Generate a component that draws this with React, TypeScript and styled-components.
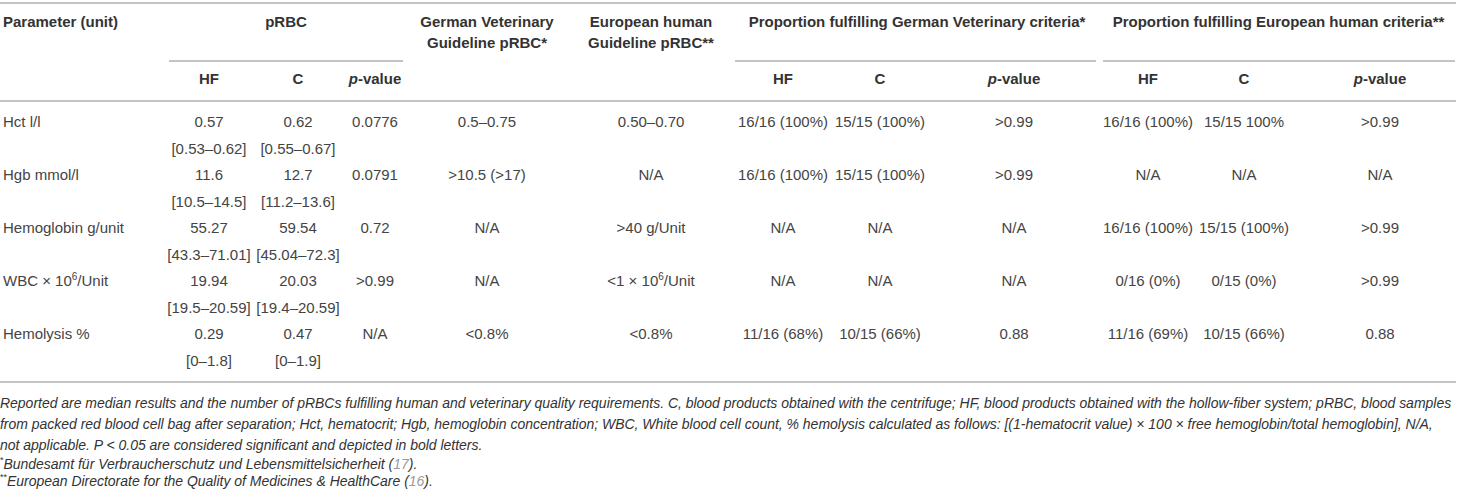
import React from 'react';
import styled, { createGlobalStyle } from 'styled-components';

const GlobalStyle = createGlobalStyle`
  body {
    margin: 0;
    background: #fff;
    font-family: "Liberation Sans", Arial, Helvetica, sans-serif;
  }
`;

const RULE = '#c4c4c4';

const Page = styled.div`
  width: 1456px;
  padding-top: 2px;
`;

const Table = styled.table`
  width: 1456px;
  table-layout: fixed;
  border-collapse: collapse;

  thead {
    border-top: 2px solid ${RULE};
    border-bottom: 2px solid ${RULE};
  }

  tbody {
    border-bottom: 2px solid ${RULE};
  }
`;

const Th = styled.th<{ $align?: 'left' | 'center'; $pad?: string; $rule?: string }>`
  font-weight: bold;
  font-size: 15px;
  line-height: 21px;
  color: #333;
  vertical-align: top;
  text-align: ${p => p.$align || 'center'};
  padding: ${p => p.$pad || '7px 0 0'};
  ${p =>
    p.$rule &&
    `
    background-image: linear-gradient(${RULE}, ${RULE});
    background-repeat: no-repeat;
    background-size: ${p.$rule} 2px;
    background-position: 2px 100%;
  `}

  em {
    font-style: italic;
  }
`;

const Td = styled.td<{ $align?: 'left' | 'center'; $first?: boolean; $last?: boolean }>`
  font-size: 15px;
  line-height: 26.5px;
  color: #444;
  vertical-align: top;
  text-align: ${p => p.$align || 'center'};
  padding: ${p => (p.$first ? '7px' : '0')} 0 ${p => (p.$last ? '7px' : '0')};
  padding-left: ${p => (p.$align === 'left' ? '3px' : '0')};
  white-space: nowrap;

  sup {
    font-size: 10px;
    line-height: 0;
  }
`;

const BodyRow = styled.tr`
  td:last-child {
    padding-left: 11px;
  }
`;

const SubHeadRow = styled.tr`
  th:last-child {
    padding-left: 11px;
  }
`;

const Notes = styled.div`
  margin-top: 10px;
  font-style: italic;
  font-size: 14px;
  letter-spacing: -0.02px;
  color: #333;
  white-space: nowrap;
`;

const NotePara = styled.p`
  margin: 0;
  line-height: 21px;
`;

const FootNote = styled.p`
  margin: 0;
  line-height: 17px;

  sup {
    font-size: 9px;
    line-height: 0;
    font-style: normal;
  }
`;

const Ref = styled.span`
  color: #9a9a9a;
`;

const colWidths = [167, 84, 94, 60, 164, 164, 100, 94, 174, 94, 98, 163];

type Cell = React.ReactNode | [React.ReactNode, React.ReactNode];

const rows: { label: React.ReactNode; cells: Cell[] }[] = [
  {
    label: 'Hct l/l',
    cells: [
      ['0.57', '[0.53–0.62]'],
      ['0.62', '[0.55–0.67]'],
      '0.0776',
      '0.5–0.75',
      '0.50–0.70',
      '16/16 (100%)',
      '15/15 (100%)',
      '>0.99',
      '16/16 (100%)',
      '15/15 100%',
      '>0.99',
    ],
  },
  {
    label: 'Hgb mmol/l',
    cells: [
      ['11.6', '[10.5–14.5]'],
      ['12.7', '[11.2–13.6]'],
      '0.0791',
      '>10.5 (>17)',
      'N/A',
      '16/16 (100%)',
      '15/15 (100%)',
      '>0.99',
      'N/A',
      'N/A',
      'N/A',
    ],
  },
  {
    label: 'Hemoglobin g/unit',
    cells: [
      ['55.27', '[43.3–71.01]'],
      ['59.54', '[45.04–72.3]'],
      '0.72',
      'N/A',
      '>40 g/Unit',
      'N/A',
      'N/A',
      'N/A',
      '16/16 (100%)',
      '15/15 (100%)',
      '>0.99',
    ],
  },
  {
    label: (
      <>
        WBC × 10<sup>6</sup>/Unit
      </>
    ),
    cells: [
      ['19.94', '[19.5–20.59]'],
      ['20.03', '[19.4–20.59]'],
      '>0.99',
      'N/A',
      <>
        {'<1 × 10'}
        <sup>6</sup>/Unit
      </>,
      'N/A',
      'N/A',
      'N/A',
      '0/16 (0%)',
      '0/15 (0%)',
      '>0.99',
    ],
  },
  {
    label: 'Hemolysis %',
    cells: [
      ['0.29', '[0–1.8]'],
      ['0.47', '[0–1.9]'],
      'N/A',
      '<0.8%',
      '<0.8%',
      '11/16 (68%)',
      '10/15 (66%)',
      '0.88',
      '11/16 (69%)',
      '10/15 (66%)',
      '0.88',
    ],
  },
];

const PValue = () => (
  <>
    <em>p</em>-value
  </>
);

const App: React.FC = () => {
  return (
    <Page>
      <GlobalStyle />
      <Table>
        <colgroup>
          {colWidths.map((w, i) => (
            <col key={i} style={{ width: w }} />
          ))}
        </colgroup>
        <thead>
          <tr>
            <Th rowSpan={2} $align="left" $pad="7px 0 0 3px">
              Parameter (unit)
            </Th>
            <Th colSpan={3} $pad="7px 0 30px" $rule="calc(100% - 4px)">
              pRBC
            </Th>
            <Th rowSpan={2}>
              German Veterinary
              <br />
              Guideline pRBC*
            </Th>
            <Th rowSpan={2}>
              European human
              <br />
              Guideline pRBC**
            </Th>
            <Th colSpan={3} $pad="7px 0 30px" $rule="calc(100% - 7px)">
              Proportion fulfilling German Veterinary criteria*
            </Th>
            <Th colSpan={3} $pad="7px 0 30px" $rule="calc(100% - 3px)">
              Proportion fulfilling European human criteria**
            </Th>
          </tr>
          <SubHeadRow>
            <Th $pad="6px 0 11px">HF</Th>
            <Th $pad="6px 0 11px">C</Th>
            <Th $pad="6px 0 11px">
              <PValue />
            </Th>
            <Th $pad="6px 0 11px">HF</Th>
            <Th $pad="6px 0 11px">C</Th>
            <Th $pad="6px 0 11px">
              <PValue />
            </Th>
            <Th $pad="6px 0 11px">HF</Th>
            <Th $pad="6px 0 11px">C</Th>
            <Th $pad="6px 0 11px">
              <PValue />
            </Th>
          </SubHeadRow>
        </thead>
        <tbody>
          {rows.map((row, r) => {
            const first = r === 0;
            const last = r === rows.length - 1;
            return (
              <BodyRow key={r}>
                <Td $align="left" $first={first} $last={last}>
                  {row.label}
                </Td>
                {row.cells.map((c, i) => (
                  <Td key={i} $first={first} $last={last}>
                    {Array.isArray(c) ? (
                      <>
                        {c[0]}
                        <br />
                        {c[1]}
                      </>
                    ) : (
                      c
                    )}
                  </Td>
                ))}
              </BodyRow>
            );
          })}
        </tbody>
      </Table>
      <Notes>
        <NotePara>
          Reported are median results and the number of pRBCs fulfilling human and veterinary quality
          requirements. C, blood products obtained with the centrifuge; HF, blood products obtained with
          the hollow-fiber system; pRBC, blood samples
          <br />
          from packed red blood cell bag after separation; Hct, hematocrit; Hgb, hemoglobin concentration;
          WBC, White blood cell count, % hemolysis calculated as follows: [(1-hematocrit value) × 100 ×
          free hemoglobin/total hemoglobin], N/A,
          <br />
          not applicable. P {'<'} 0.05 are considered significant and depicted in bold letters.
        </NotePara>
        <FootNote>
          <sup>*</sup>Bundesamt für Verbraucherschutz und Lebensmittelsicherheit (<Ref>17</Ref>).
        </FootNote>
        <FootNote>
          <sup>**</sup>European Directorate for the Quality of Medicines &amp; HealthCare (<Ref>16</Ref>).
        </FootNote>
      </Notes>
    </Page>
  );
};

export default App;
